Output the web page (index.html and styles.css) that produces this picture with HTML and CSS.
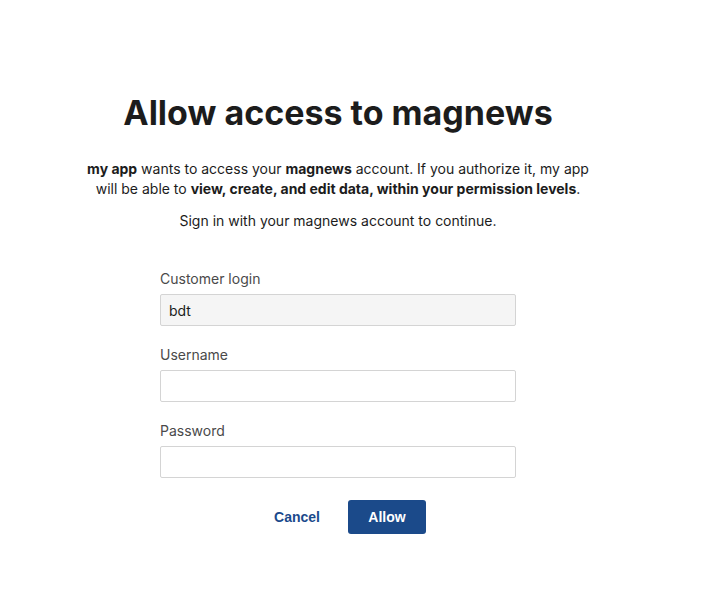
FILE: index.html
```html
<!DOCTYPE html>
<html>
<head>
<meta charset="utf-8">
<link rel="stylesheet" href="styles.css">
</head>
<body>
<main class="page">
  <h1 class="title">Allow access to magnews</h1>
  <p class="intro"><b>my app</b> wants to access your <b>magnews</b> account. If you authorize it, my app will be able to <b>view, create, and edit data, within your permission levels</b>.</p>
  <p class="signin">Sign in with your magnews account to continue.</p>
  <form class="form">
    <label class="field">
      <span class="label">Customer login</span>
      <input class="input input-readonly" type="text" value="bdt" readonly>
    </label>
    <label class="field">
      <span class="label">Username</span>
      <input class="input" type="text">
    </label>
    <label class="field">
      <span class="label">Password</span>
      <input class="input" type="password">
    </label>
    <div class="actions">
      <button type="button" class="btn btn-link">Cancel</button>
      <button type="button" class="btn btn-primary">Allow</button>
    </div>
  </form>
</main>
</body>
</html>
```

FILE: styles.css
```css
html, body {
  margin: 0;
  padding: 0;
  background: #ffffff;
}
body {
  font-family: Inter, "Liberation Sans", sans-serif;
  color: #1c1c1c;
}
.page {
  width: 676px;
  display: flex;
  flex-direction: column;
  align-items: center;
  padding-top: 92px;
}
.title {
  margin: 0;
  font-size: 34px;
  line-height: 42px;
  font-weight: 700;
  color: #1c1c1c;
}
.intro {
  margin: 25px 0 0;
  width: 510px;
  text-align: center;
  font-size: 14px;
  line-height: 20px;
}
.intro b {
  font-weight: 700;
}
.signin {
  margin: 12px 0 0;
  font-size: 14px;
  line-height: 20px;
  text-align: center;
}
.form {
  margin-top: 38px;
  width: 356px;
  display: flex;
  flex-direction: column;
}
.field {
  display: flex;
  flex-direction: column;
  margin-bottom: 19px;
}
.label {
  font-size: 14px;
  line-height: 20px;
  color: #4a4a4a;
  margin-bottom: 5px;
}
.input {
  box-sizing: border-box;
  width: 356px;
  height: 32px;
  border: 1px solid #d4d4d4;
  border-radius: 2px;
  padding: 0 8px;
  font-family: Inter, "Liberation Sans", sans-serif;
  font-size: 14px;
  color: #1c1c1c;
  background: #ffffff;
  outline: none;
  margin: 0;
}
.input-readonly {
  background: #f5f5f5;
}
.actions {
  display: flex;
  justify-content: center;
  align-items: center;
  gap: 28px;
  margin-top: 3px;
  padding-left: 24px;
}
.btn {
  font-family: "Liberation Sans", Arial, sans-serif;
  font-weight: 700;
  font-size: 14px;
  border: none;
  margin: 0;
  cursor: pointer;
}
.btn-link {
  background: none;
  color: #1b4a8c;
  padding: 0;
}
.btn-primary {
  width: 78px;
  height: 34px;
  background: #1b4a8a;
  color: #ffffff;
  border-radius: 3px;
}
```
